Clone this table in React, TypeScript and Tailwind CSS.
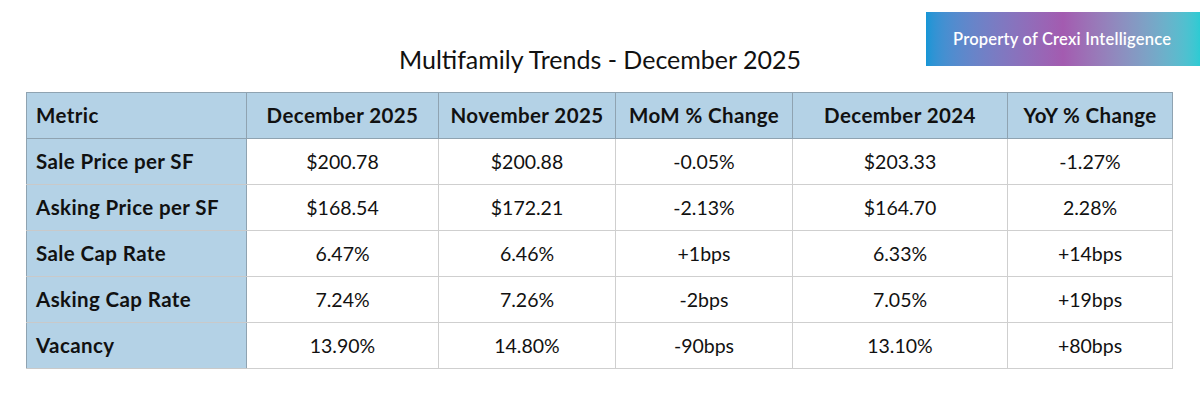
import React from 'react';

const columns = ['Metric', 'December 2025', 'November 2025', 'MoM % Change', 'December 2024', 'YoY % Change'];
const widths = ['w-[220px]', 'w-[192px]', 'w-[177px]', 'w-[177px]', 'w-[215px]', 'w-[165px]'];

const rows = [
  ['Sale Price per SF', '$200.78', '$200.88', '-0.05%', '$203.33', '-1.27%'],
  ['Asking Price per SF', '$168.54', '$172.21', '-2.13%', '$164.70', '2.28%'],
  ['Sale Cap Rate', '6.47%', '6.46%', '+1bps', '6.33%', '+14bps'],
  ['Asking Cap Rate', '7.24%', '7.26%', '-2bps', '7.05%', '+19bps'],
  ['Vacancy', '13.90%', '14.80%', '-90bps', '13.10%', '+80bps'],
];

const App: React.FC = () => {
  return (
    <div className="w-[1200px] h-[403px] bg-white relative font-['Lato','Noto_Sans',sans-serif] text-[#111]">
      {/* Watermark badge */}
      <div className="absolute left-[926px] top-[12px] w-[274px] h-[54px] flex items-center pl-[27px] bg-gradient-to-r from-[#1596d6] via-[#a35bb0] to-[#2ccbd3]">
        <span className="text-white text-[16.5px] font-semibold tracking-[0.2px]">Property of Crexi Intelligence</span>
      </div>

      <div className="pt-[42px] flex flex-col items-center">
        <h1 className="text-[25px] leading-[34px] font-normal">Multifamily Trends - December 2025</h1>
      </div>

      <div className="pl-[26px] pt-[16px]">
        <table className="border-collapse table-fixed">
          <thead>
            <tr className="h-[46px] bg-[#b4d2e6]">
              {columns.map((c, i) => (
                <th
                  key={c}
                  className={`${widths[i]} border border-[#8fa3b1] text-[20.5px] tracking-[0.4px] font-bold ${i === 0 ? 'text-left pl-[9px]' : 'text-center'}`}
                >
                  {c}
                </th>
              ))}
            </tr>
          </thead>
          <tbody>
            {rows.map((r) => (
              <tr key={r[0]} className="h-[46px]">
                {r.map((v, i) =>
                  i === 0 ? (
                    <td key={i} className="bg-[#b4d2e6] border border-[#8fa3b1] border-b-[#c9c9c9] text-left pl-[9px] text-[20.5px] tracking-[0.4px] font-bold">
                      {v}
                    </td>
                  ) : (
                    <td key={i} className="border border-[#cfcfcf] text-center text-[19.5px]">
                      {v}
                    </td>
                  )
                )}
              </tr>
            ))}
          </tbody>
        </table>
      </div>
    </div>
  );
};

export default App;
